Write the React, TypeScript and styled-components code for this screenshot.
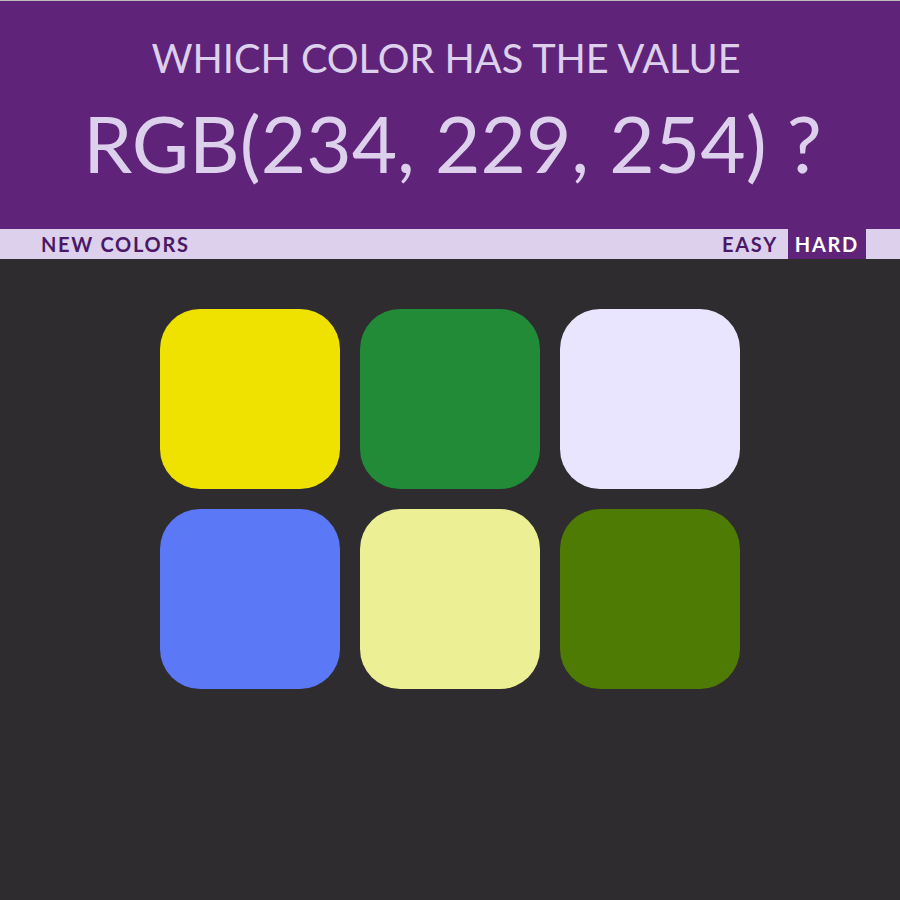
import React from "react";
import styled, { createGlobalStyle } from "styled-components";

const Global = createGlobalStyle`
  html, body { margin: 0; padding: 0; background: #2e2c2f; }
  body { font-family: Lato, "Open Sans", sans-serif; }
`;

const Page = styled.div`
  min-height: 900px;
  background: #2e2c2f;
`;

const Header = styled.header`
  background: #5f2479;
  border-top: 1px solid #bdbdbd;
  padding: 33px 0 38px;
  text-align: center;
  color: #dcd0ec;
`;

const Question = styled.h1`
  margin: 0;
  padding-right: 8px;
  font-weight: 400;
  font-size: 39.7px;
  line-height: 48px;
`;

const Value = styled.div`
  margin-top: 13px;
  padding-left: 5px;
  font-size: 78.4px;
  line-height: 96px;
  font-weight: 400;
`;

const Bar = styled.nav`
  height: 30px;
  background: #dcd0ec;
  display: flex;
  align-items: stretch;
  padding: 0 34px 0 41px;
`;

const Spacer = styled.div`
  flex: 1;
`;

const BarButton = styled.button<{ $active?: boolean }>`
  border: none;
  margin: 0;
  font-family: Lato, "Open Sans", sans-serif;
  font-weight: 700;
  font-size: 20px;
  line-height: 30px;
  letter-spacing: 1.7px;
  text-transform: uppercase;
  padding: ${(p) => (p.$active ? "0 7px" : "0 10px")};
  background: ${(p) => (p.$active ? "#5f2479" : "transparent")};
  color: ${(p) => (p.$active ? "#ffffff" : "#4a1866")};
  cursor: pointer;
`;

const NewColors = styled(BarButton)`
  padding: 0;
`;

const Grid = styled.div`
  width: 580px;
  margin: 50px auto 0;
  display: grid;
  grid-template-columns: repeat(3, 180px);
  gap: 20px;
`;

const Swatch = styled.div<{ $color: string }>`
  width: 180px;
  height: 180px;
  border-radius: 40px;
  background: ${(p) => p.$color};
  cursor: pointer;
`;

const colors = ["#f0e200", "#218b38", "#eae5fe", "#5b78f7", "#ecef94", "#4e7b03"];

export default function App() {
  return (
    <Page>
      <Global />
      <Header>
        <Question>WHICH COLOR HAS THE VALUE</Question>
        <Value>RGB(234, 229, 254) ?</Value>
      </Header>
      <Bar>
        <NewColors>New Colors</NewColors>
        <Spacer />
        <BarButton>Easy</BarButton>
        <BarButton $active>Hard</BarButton>
      </Bar>
      <Grid>
        {colors.map((c, i) => (
          <Swatch key={i} $color={c} />
        ))}
      </Grid>
    </Page>
  );
}
